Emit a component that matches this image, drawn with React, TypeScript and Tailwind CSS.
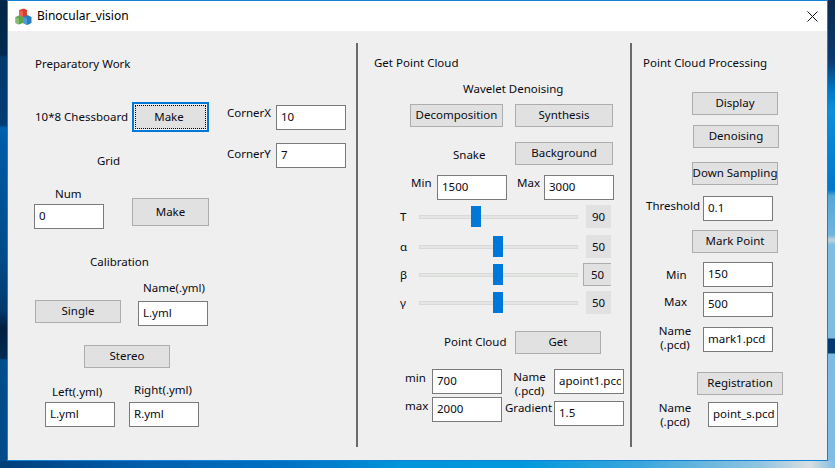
const btn = 'flex items-center justify-center bg-[#e1e1e1] border border-[#adadad] pb-px leading-[18px] whitespace-nowrap shrink-0';

function Btn({ children, className = '' }: { children: string; className?: string }) {
  return <div className={`${btn} ${className}`}>{children}</div>;
}

function Field({ value, className = '' }: { value: string; className?: string }) {
  return (
    <div className={`w-[70px] h-[25px] shrink-0 bg-white border border-[#7a7a7a] pl-[4px] pr-[2px] pt-[2px] leading-[18px] ${className}`}>
      <div className="overflow-hidden whitespace-nowrap">{value}</div>
    </div>
  );
}

function Label({ children, className = '' }: { children: string; className?: string }) {
  return <div className={`h-[18px] leading-[20px] whitespace-nowrap ${className}`}>{children}</div>;
}

const sliders = [
  { name: 'T', value: 90, handle: 52, row: 'mt-[5px]', box: 'ml-[8px] w-[25px]' },
  { name: 'α', value: 50, handle: 74, row: 'mt-[7px]', box: 'ml-[8px] w-[25px]' },
  { name: 'β', value: 50, handle: 74, row: 'mt-[5px]', box: 'ml-[5px] w-[28px] border border-r-0 border-[#adadad]' },
  { name: 'γ', value: 50, handle: 74, row: 'mt-[5px]', box: 'ml-[8px] w-[25px]' },
];

function Slider({ name, value, handle, row, box }: { name: string; value: number; handle: number; row: string; box: string }) {
  return (
    <div className={`flex h-[23px] ml-[26px] ${row}`}>
      <div className="w-[19px] pt-[3px] leading-[18px]">{name}</div>
      <div className="relative w-[159px] flex items-center">
        <div className="w-full h-[4px] bg-[#e4e6e4] border border-[#d8dad8]" />
        <div className="absolute top-[1px] w-[10px] h-[21px] bg-[#0078d7]" style={{ left: handle }} />
      </div>
      <div className={`bg-[#e1e1e1] flex items-center justify-center ${box}`}>{value}</div>
    </div>
  );
}

function Cube() {
  return (
    <svg width="17" height="17" viewBox="0 0 17 17" className="shrink-0">
      <path d="M4 2 L9 0.5 L12 2 L12 8 L8 9.5 L4 8 Z" fill="#d8402c" />
      <path d="M4 2 L8 3.5 L8 9.5 L4 8 Z" fill="#e8664a" />
      <path d="M0.5 9 L4 7.5 L8 9 L8 15 L4 16.5 L0.5 15 Z" fill="#5fa34a" />
      <path d="M0.5 9 L4 10.5 L4 16.5 L0.5 15 Z" fill="#88bd72" />
      <path d="M8 9 L12.5 7 L16.5 9 L16.5 15 L12.5 17 L8 15 Z" fill="#2c7cc0" />
      <path d="M8 9 L12 10.5 L12 17 L8 15 Z" fill="#4f9bd8" />
    </svg>
  );
}

export default function App() {
  return (
    <div className="w-[835px] h-[468px] overflow-hidden flex flex-col font-['Noto_Sans',sans-serif] text-[11.5px] text-[#0a0a14]">
      <div className="flex h-[461px]">
        <div className="w-[7px] bg-[linear-gradient(180deg,#02254a_0px,#02294f_55px,#003a6e_57px,#003d74_125px,#0063b1_128px,#005ba5_140px,#004a88_260px,#003a6e_310px,#021f40_328px,#012a52_358px,#004d8c_360px,#004a8a_461px)]" />

        {/* window */}
        <div className="w-[821px] border border-[#1283d8] flex flex-col bg-[#efefef]">
          <div className="h-[30px] bg-white flex items-center pl-[7px]">
            <Cube />
            <span className="ml-[5px] text-[12px] text-black">Binocular_vision</span>
            <svg width="11" height="11" viewBox="0 0 11 11" className="ml-auto mr-[9px]">
              <path d="M0.5 0.5 L10.5 10.5 M10.5 0.5 L0.5 10.5" stroke="#111" strokeWidth="1" fill="none" />
            </svg>
          </div>

          <div className="flex flex-1">
            {/* Preparatory Work */}
            <div className="w-[348px] pl-[27px] pt-[23px] flex flex-col">
              <Label>Preparatory Work</Label>
              <div className="flex">
                <div className="w-[192px] flex flex-col">
                  <div className="flex items-center mt-[30px]">
                    <span className="w-[97px] whitespace-nowrap">10*8 Chessboard</span>
                    <div className="w-[77px] h-[30px] border-2 border-[#0078d7] p-px shrink-0">
                      <div className="w-full h-full bg-[#e1e1e1] border border-dotted border-black pr-[3px] flex items-center justify-center">Make</div>
                    </div>
                  </div>
                  <Label className="mt-[19px] ml-[62px]">Grid</Label>
                  <div className="flex mt-[16px] -ml-px">
                    <div className="flex flex-col w-[70px]">
                      <Label className="ml-[21px] -mt-px">Num</Label>
                      <Field value="0" className="mt-[2px]" />
                    </div>
                    <Btn className="w-[77px] h-[28px] mt-[13px] ml-[28px]">Make</Btn>
                  </div>
                </div>
                <div className="flex flex-col mt-[33px]">
                  <div className="flex">
                    <Label className="w-[49px] -mt-[2px]">CornerX</Label>
                    <Field value="10" />
                  </div>
                  <div className="flex mt-[13px]">
                    <Label className="w-[49px] mt-px">CornerY</Label>
                    <Field value="7" />
                  </div>
                </div>
              </div>

              <Label className="mt-[23px] ml-[55px]">Calibration</Label>
              <div className="flex mt-[8px]">
                <Btn className="w-[86px] h-[23px] mt-[22px]">Single</Btn>
                <div className="flex flex-col ml-[17px]">
                  <Label className="ml-[5px]">Name(.yml)</Label>
                  <Field value="L.yml" className="mt-[5px]" />
                </div>
              </div>
              <Btn className="w-[86px] h-[23px] mt-[19px] ml-[49px]">Stereo</Btn>
              <div className="flex mt-[13px] ml-[10px]">
                <div className="flex flex-col">
                  <Label className="mt-px ml-[7px]">Left(.yml)</Label>
                  <Field value="L.yml" className="mt-[2px]" />
                </div>
                <div className="flex flex-col ml-[14px]">
                  <Label className="ml-[5px] -mt-px">Right(.yml)</Label>
                  <Field value="R.yml" className="mt-[4px]" />
                </div>
              </div>
            </div>

            <div className="w-[2px] h-[404px] mt-[12px] bg-[#6a6a6a]" />

            {/* Get Point Cloud */}
            <div className="w-[272px] pl-[16px] pt-[22px] flex flex-col">
              <Label>Get Point Cloud</Label>
              <Label className="mt-[8px] ml-[89px]">Wavelet Denoising</Label>
              <div className="flex mt-[7px] ml-[36px]">
                <Btn className="w-[93px] h-[23px]">Decomposition</Btn>
                <Btn className="w-[98px] h-[23px] ml-[12px]">Synthesis</Btn>
              </div>
              <div className="flex mt-[15px]">
                <Label className="w-[141px] mt-[3px] pl-[79px]">Snake</Label>
                <Btn className="w-[98px] h-[23px]">Background</Btn>
              </div>
              <div className="flex mt-[10px] ml-[37px]">
                <Label className="w-[26px] -mt-[2px]">Min</Label>
                <Field value="1500" />
                <Label className="w-[27px] ml-[10px] -mt-[2px]">Max</Label>
                <Field value="3000" />
              </div>
              {sliders.map((s) => (
                <Slider key={s.name} {...s} />
              ))}
              <div className="flex mt-[17px] ml-[70px]">
                <Label className="w-[71px] mt-px">Point Cloud</Label>
                <Btn className="w-[86px] h-[23px]">Get</Btn>
              </div>
              <div className="flex mt-[15px] ml-[31px]">
                <div className="flex flex-col">
                  <div className="flex">
                    <Label className="w-[27px] -mt-px">min</Label>
                    <Field value="700" />
                  </div>
                  <div className="flex mt-[3px]">
                    <Label className="w-[27px] -mt-px">max</Label>
                    <Field value="2000" />
                  </div>
                </div>
                <div className="flex flex-col ml-[3px]">
                  <div className="flex">
                    <div className="w-[49px] text-center leading-[14px] mt-px">Name<br />(.pcd)</div>
                    <Field value="apoint1.pcd" />
                  </div>
                  <div className="flex mt-[3px]">
                    <Label className="w-[49px] -mt-[3px]">Gradient</Label>
                    <Field value="1.5" />
                  </div>
                </div>
              </div>
            </div>

            <div className="w-[2px] h-[404px] mt-[12px] bg-[#6a6a6a]" />

            {/* Point Cloud Processing */}
            <div className="flex-1 pl-[11px] pt-[22px] flex flex-col">
              <Label>Point Cloud Processing</Label>
              <Btn className="w-[86px] h-[23px] mt-[21px] ml-[49px]">Display</Btn>
              <Btn className="w-[86px] h-[23px] mt-[10px] ml-[50px]">Denoising</Btn>
              <Btn className="w-[86px] h-[23px] mt-[14px] ml-[49px]">Down Sampling</Btn>
              <div className="flex mt-[11px] ml-[3px]">
                <Label className="w-[57px]">Threshold</Label>
                <Field value="0.1" />
              </div>
              <Btn className="w-[86px] h-[23px] mt-[9px] ml-[49px]">Mark Point</Btn>
              <div className="flex mt-[9px] ml-[23px]">
                <Label className="w-[37px] mt-[3px]">Min</Label>
                <Field value="150" />
              </div>
              <div className="flex mt-[5px] ml-[21px]">
                <Label className="w-[39px]">Max</Label>
                <Field value="500" />
              </div>
              <div className="flex mt-[10px] ml-[14px]">
                <div className="w-[36px] text-center leading-[14px] -mt-[3px]">Name<br />(.pcd)</div>
                <Field value="mark1.pcd" className="ml-[10px]" />
              </div>
              <Btn className="w-[86px] h-[23px] mt-[20px] ml-[54px]">Registration</Btn>
              <div className="flex mt-[7px] ml-[14px]">
                <div className="w-[36px] text-center leading-[14px] -mt-px">Name<br />(.pcd)</div>
                <Field value="point_s.pcd" className="ml-[15px]" />
              </div>
            </div>
          </div>
        </div>

        <div className="w-[7px] bg-[linear-gradient(180deg,#0a2a50_0px,#0a3a6e_60px,#0178c8_90px,#0c8fdc_110px,#0078cc_190px,#55a8d8_196px,#70b4de_235px,#c0d4dc_240px,#80bde4_245px,#7fbde0_338px,#053a70_339px,#053a70_353px,#7cbce2_354px,#80bde4_461px)]" />
      </div>
      <div className="h-[7px] bg-[linear-gradient(90deg,#003f78_0px,#00478a_45px,#0060ae_150px,#0071c2_285px,#0094d8_400px,#0098dc_520px,#3aa6dc_640px,#90c4e0_760px,#d8dfe0_810px,#80bde4_835px)]" />
    </div>
  );
}
